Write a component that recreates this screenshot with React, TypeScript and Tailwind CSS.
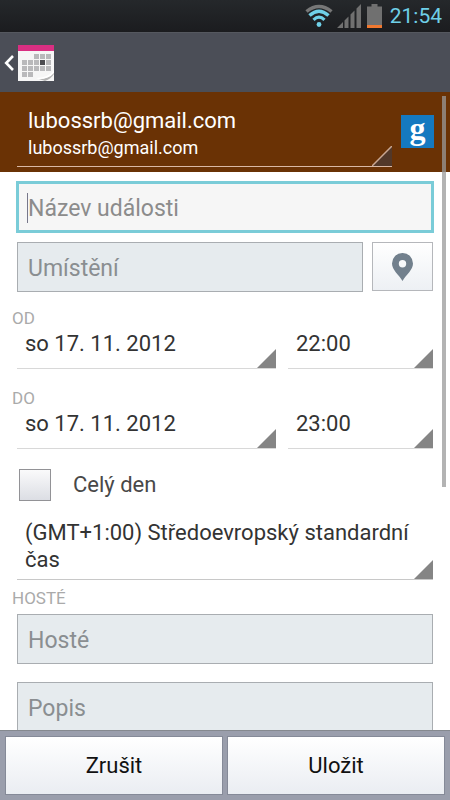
import type { ReactNode } from 'react';

type PickerProps = {
  id: string;
  label: string;
  value: string;
  className?: string;
};

const Corner = () => (
  <svg
    className="pointer-events-none absolute right-0 bottom-0 h-[19px] w-[19px]"
    viewBox="0 0 19 19"
    aria-hidden="true"
  >
    <path d="M19 0V19H0Z" fill="#858585" />
  </svg>
);

const Picker = ({ id, label, value, className }: PickerProps) => (
  <div className={`relative border-b border-[#d8d8d8] ${className ?? ''}`}>
    <select
      id={id}
      aria-label={label}
      className="block h-12 w-full appearance-none bg-transparent px-2 pb-0.5 text-[22px] text-[#333] outline-none"
    >
      <option>{value}</option>
    </select>
    <Corner />
  </div>
);

const SectionLabel = ({ children }: { children: ReactNode }) => (
  <h2 className="px-3 text-[17px] leading-5 text-[#aaaaaa]">{children}</h2>
);

const StatusBar = () => (
  <div className="flex h-8 shrink-0 items-center justify-end bg-linear-to-b from-[#25282b] to-[#1b1c1f] pr-2">
    <svg className="mr-1 h-6 w-7" viewBox="0 0 28 24" fill="none" aria-label="Wi-Fi">
      <path d="M1.5 7.5Q14 -2.500 26.500 7.500" stroke="#777" strokeWidth="3.500" />
      <path d="M4.500 11.500Q14 3 23.500 11.500" stroke="#6fd0e8" strokeWidth="3.500" />
      <path d="M8.500 15.800Q14 10.500 19.500 15.800" stroke="#6fd0e8" strokeWidth="3.200" />
      <circle cx="14" cy="20.500" r="2.400" fill="#6fd0e8" />
    </svg>
    <svg className="mr-1.5 h-6 w-6" viewBox="0 0 24 24" fill="#707070" aria-label="Signal">
      <path d="M0 24L6 18V24ZM7.500 16.500L11.500 12.500V24H7.500ZM13.500 10.500L17.500 6.500V24H13.500ZM19.500 4.500L24 0V24H19.500Z" />
    </svg>
    <svg className="mr-2 h-6 w-[15px]" viewBox="0 0 15 24" aria-label="Battery">
      <path d="M4.500 0H10.500V2.500H15V21H0V2.500H4.500Z" fill="#707070" />
      <rect y="21" width="15" height="3" fill="#f07830" />
    </svg>
    <time className="text-[21px] leading-8 text-[#6fd0e8]">21:54</time>
  </div>
);

const CalendarIcon = () => (
  <svg className="h-9 w-9" viewBox="0 0 36 36" aria-hidden="true">
    <rect width="36" height="36" fill="#f6f6f6" />
    <rect width="36" height="6" fill="#d92f82" />
    <g fill="#b9b9bb">
      <path d="M16 9h5v5h-5zM22 9h5v5h-5zM28 9h5v5h-5z" />
      <path d="M4 15h5v5H4zM10 15h5v5h-5zM16 15h5v5h-5zM28 15h5v5h-5z" />
      <path d="M4 21h5v5H4zM10 21h5v5h-5zM16 21h5v5h-5zM22 21h5v5h-5zM28 21h5v5h-5z" />
      <path d="M4 27h5v5H4zM10 27h5v5h-5z" />
    </g>
    <rect x="22" y="15" width="5" height="5" fill="#4c4c50" />
    <path d="M21 34Q31 34 36 27V29Q33 34 27 36Z" fill="#b4b4b4" />
    <path d="M18 33Q30 33 36 25V28Q31 34 21 34Z" fill="#fff" />
  </svg>
);

const AppBar = () => (
  <header className="flex h-[60px] shrink-0 items-center border-t border-[#55585f] bg-[#4b4e57]">
    <button type="button" aria-label="Zpět" className="flex items-center gap-1 pl-1">
      <svg className="h-4 w-[10px]" viewBox="0 0 10 16" fill="none" aria-hidden="true">
        <path d="M9 1L2.200 8L9 15" stroke="#fff" strokeWidth="2.600" />
      </svg>
      <CalendarIcon />
    </button>
  </header>
);

const AccountRow = () => (
  <div className="flex h-20 items-start bg-[#6a3205] pr-4 pl-[17px] text-white">
    <div className="relative h-[75px] flex-1 border-b border-[#d9b8a4] pt-3">
      <select
        aria-label="Kalendář"
        className="block h-8 w-full appearance-none bg-transparent px-[11px] text-[22px] outline-none"
      >
        <option>lubossrb@gmail.com</option>
      </select>
      <p className="px-[11px] text-lg leading-6">lubossrb@gmail.com</p>
      <svg
        className="pointer-events-none absolute right-0 bottom-0 h-5 w-5"
        viewBox="0 0 20 20"
        aria-hidden="true"
      >
        <path d="M20 0V20H0Z" fill="#523829" />
        <path d="M20 0L0 20" stroke="#c9a793" strokeWidth="1.500" />
      </svg>
    </div>
    <div className="mt-[23px] ml-[9px] flex h-[33px] w-[33px] items-center justify-center bg-[#1579c0]">
      <span className="pb-2 font-['Liberation_Serif',serif] text-[32px] leading-8 font-bold">
        g
      </span>
    </div>
  </div>
);

const App = () => {
  return (
    <div className="flex h-dvh flex-col overflow-hidden bg-white font-[Roboto,sans-serif]">
      <StatusBar />
      <AppBar />

      <main className="relative min-h-0 flex-1 overflow-hidden">
        <AccountRow />

        <form className="pt-[9px]">
          <div className="relative mx-4">
            <input
              aria-label="Název události"
              placeholder="Název události"
              className="block h-[52px] w-full border-3 border-[#7accd8] bg-[#f6f6f6] px-[9px] pt-0.5 text-[23px] text-[#333] outline-none placeholder:text-[#8c8c8c]"
            />
            <span className="absolute top-3 left-[11px] h-[30px] w-px bg-[#77778a]" />
          </div>

          <div className="mt-[9px] flex gap-[9px] px-[17px]">
            <input
              aria-label="Umístění"
              placeholder="Umístění"
              className="h-[50px] min-w-0 flex-1 border border-[#a9adb1] bg-[#e6ebee] px-[10px] pt-0.5 text-[23px] text-[#333] outline-none placeholder:text-[#8a8e91]"
            />
            <button
              type="button"
              aria-label="Mapa"
              className="flex h-[49px] w-[61px] items-center justify-center border border-[#b5b7bb] bg-linear-to-b from-white to-[#edf0f4]"
            >
              <svg className="h-7 w-[21px]" viewBox="0 0 21 28" aria-hidden="true">
                <path
                  d="M10.500 0A10.400 10.400 0 0 0 0 10.400C0 17 6.500 21 10.500 28C14.500 21 21 17 21 10.400A10.400 10.400 0 0 0 10.500 0ZM10.500 7A3.700 3.700 0 1 1 10.500 14.400A3.700 3.700 0 1 1 10.500 7Z"
                  fill="#72808d"
                  fillRule="evenodd"
                />
              </svg>
            </button>
          </div>

          <div className="pt-4">
            <SectionLabel>OD</SectionLabel>
            <div className="-mt-2 flex gap-3 px-[17px]">
              <Picker id="start-date" label="Datum od" value="so 17. 11. 2012" className="flex-1" />
              <Picker id="start-time" label="Čas od" value="22:00" className="w-[145px]" />
            </div>
          </div>

          <div className="pt-[19px]">
            <SectionLabel>DO</SectionLabel>
            <div className="-mt-2 flex gap-3 px-[17px]">
              <Picker id="end-date" label="Datum do" value="so 17. 11. 2012" className="flex-1" />
              <Picker id="end-time" label="Čas do" value="23:00" className="w-[145px]" />
            </div>
          </div>

          <div className="flex items-center gap-[22px] px-[19px] pt-5">
            <input
              id="all-day"
              type="checkbox"
              className="h-8 w-8 appearance-none border border-[#929296] bg-linear-to-b from-[#fafafb] to-[#dcdee4]"
            />
            <label htmlFor="all-day" className="text-[22px] leading-8 text-[#484848]">
              Celý den
            </label>
          </div>

          <div className="relative mx-[17px] mt-[18px] border-b border-[#c8c8c8]">
            <select
              aria-label="Časové pásmo"
              className="block h-[60px] w-full appearance-none bg-transparent pr-0 pb-1.5 pl-2 text-[22px] leading-[27px] whitespace-normal text-[#333] outline-none"
            >
              <option>(GMT+1:00) Středoevropský standardní čas</option>
            </select>
            <Corner />
          </div>

          <div className="pt-2">
            <SectionLabel>HOSTÉ</SectionLabel>
            <div className="flex flex-col gap-[18px] px-[17px] pt-[6px]">
              <input
                aria-label="Hosté"
                placeholder="Hosté"
                className="h-[50px] border border-[#a9adb1] bg-[#e6ebee] px-[10px] pt-0.5 text-[23px] text-[#333] outline-none placeholder:text-[#8a8e91]"
              />
              <input
                aria-label="Popis"
                placeholder="Popis"
                className="h-[50px] border border-[#a9adb1] bg-[#e6ebee] px-[10px] pt-0.5 text-[23px] text-[#333] outline-none placeholder:text-[#8a8e91]"
              />
            </div>
          </div>
        </form>

        <div className="absolute top-1 right-1 h-[391px] w-1 bg-[#9a9a9a]/75" />
      </main>

      <footer className="grid h-[70px] shrink-0 grid-cols-2 gap-1 border-t border-[#85898f] bg-[#9a9eac] px-[5px] pt-[5px] pb-[5px]">
        <button
          type="button"
          className="border border-[#858a98] bg-linear-to-b from-white to-[#eaedf2] text-[22px] text-[#111]"
        >
          Zrušit
        </button>
        <button
          type="button"
          className="border border-[#858a98] bg-linear-to-b from-white to-[#eaedf2] text-[22px] text-[#111]"
        >
          Uložit
        </button>
      </footer>
    </div>
  );
};

export default App;
